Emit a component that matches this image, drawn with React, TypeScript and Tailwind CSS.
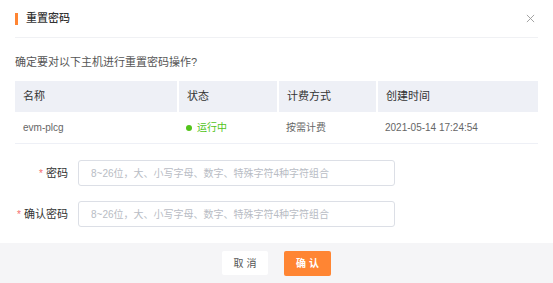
import React from "react";

const columns = [
  { key: "name", title: "名称", width: "w-[162px]" },
  { key: "status", title: "状态", width: "w-[100px]" },
  { key: "billing", title: "计费方式", width: "w-[99px]" },
  { key: "created", title: "创建时间", width: "flex-1" },
];

const row = {
  name: "evm-plcg",
  billing: "按需计费",
  created: "2021-05-14 17:24:54",
};

const placeholder = "8~26位，大、小写字母、数字、特殊字符4种字符组合";

const FormRow: React.FC<{ label: string }> = ({ label }) => (
  <div className="flex items-center">
    <label className="w-[53px] flex justify-end items-center text-[11px] text-[#333]">
      <span className="text-[#f56c6c] mr-[3px] text-[10px]">*</span>
      {label}
    </label>
    <input
      type="password"
      placeholder={placeholder}
      className="ml-[10px] w-[317px] h-[26px] border border-[#dcdfe6] rounded-[3px] px-[12px] text-[10px] placeholder:text-[#b8bcc4] outline-none"
    />
  </div>
);

export default function App() {
  return (
    <div className="w-[553px] h-[283px] bg-white flex flex-col font-['Liberation_Sans','Noto_Sans_CJK_SC',sans-serif] overflow-hidden">
      {/* Header */}
      <div className="mx-[15px] h-[38px] flex items-center justify-between border-b border-[#f0f1f4]">
        <div className="flex items-center gap-[8px]">
          <span className="w-[3px] h-[12px] bg-[#ff8533]" />
          <span className="text-[11px] text-[#333] font-medium">重置密码</span>
        </div>
        <svg width="9" height="9" viewBox="0 0 10 10" className="mr-[3px]">
          <path d="M1 1L9 9M9 1L1 9" stroke="#999" strokeWidth="1" />
        </svg>
      </div>

      {/* Body */}
      <div className="px-[15px]">
        <p className="mt-[16px] leading-[16px] text-[11px] text-[#555]">确定要对以下主机进行重置密码操作?</p>

        <div className="mt-[11px] w-[523px]">
          <div className="flex h-[31px] bg-[#eef0f6] text-[11px] text-[#333]">
            {columns.map((c, i) => (
              <div
                key={c.key}
                className={`${c.width} flex items-center px-[8px] ${i > 0 ? "border-l-2 border-white" : ""}`}
              >
                {c.title}
              </div>
            ))}
          </div>
          <div className="flex h-[32px] border-b border-[#eef0f6] text-[10px] text-[#666]">
            <div className="w-[162px] flex items-center px-[8px]">{row.name}</div>
            <div className="w-[100px] flex items-center px-[9px] text-[#52c41a]">
              <span className="w-[6px] h-[6px] rounded-full bg-[#52c41a] mr-[5px]" />
              运行中
            </div>
            <div className="w-[99px] flex items-center px-[9px]">{row.billing}</div>
            <div className="flex-1 flex items-center px-[9px]">{row.created}</div>
          </div>
        </div>

        <div className="mt-[16px] flex flex-col gap-[15px]">
          <FormRow label="密码" />
          <FormRow label="确认密码" />
        </div>
      </div>

      {/* Footer */}
      <div className="mt-auto h-[40px] bg-[#f5f5f7] flex justify-center items-start pt-[8px] gap-[16px]">
        <button className="w-[46px] h-[24px] bg-white rounded-[2px] text-[10px] text-[#555] tracking-[3px] pl-[3px]">
          取消
        </button>
        <button className="w-[47px] h-[25px] bg-[#ff8533] rounded-[2px] text-[10px] text-white font-bold tracking-[3px] pl-[3px]">
          确认
        </button>
      </div>
    </div>
  );
}
